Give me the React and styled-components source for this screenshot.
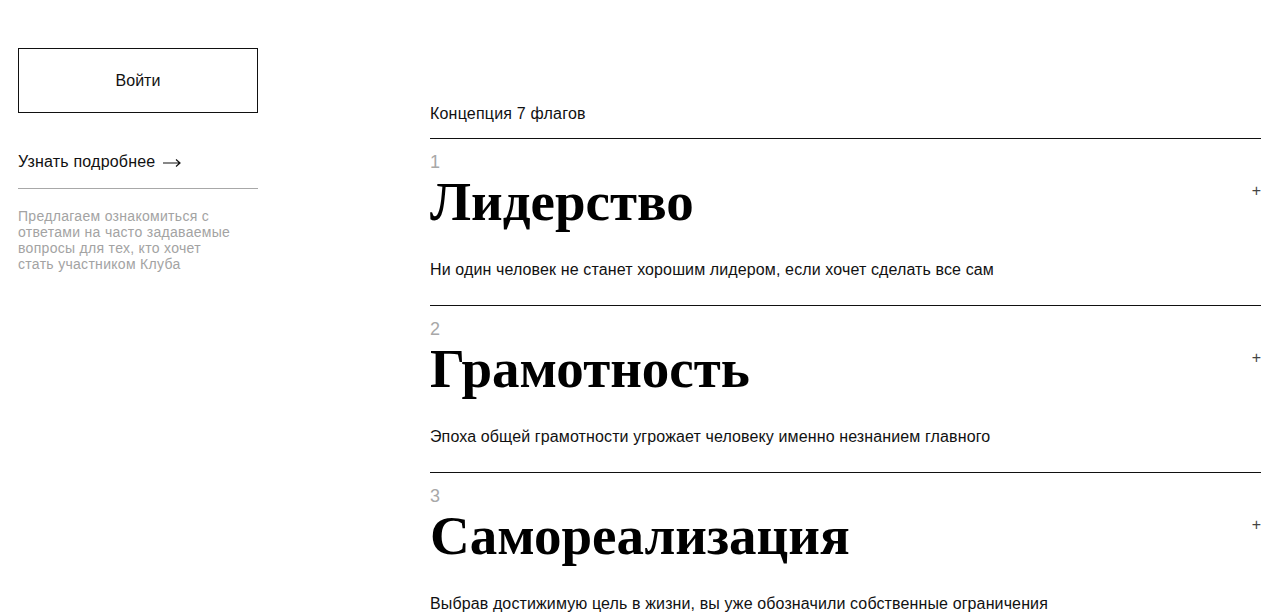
import React from 'react';
import styled, { createGlobalStyle } from 'styled-components';

const GlobalStyle = createGlobalStyle`
  body {
    margin: 0;
    background: #fff;
    color: #111;
    font-family: "Liberation Sans", Arial, sans-serif;
  }
`;

const flags = [
  {
    title: 'Лидерство',
    text: 'Ни один человек не станет хорошим лидером, если хочет сделать все сам'
  },
  {
    title: 'Грамотность',
    text: 'Эпоха общей грамотности угрожает человеку именно незнанием главного'
  },
  {
    title: 'Самореализация',
    text: 'Выбрав достижимую цель в жизни, вы уже обозначили собственные ограничения'
  }
];

const Page = styled.div`
  display: flex;
  padding: 48px 21px 0 18px;
  height: 614px;
  box-sizing: border-box;
  overflow: hidden;
`;

const Sidebar = styled.aside`
  width: 240px;
  flex-shrink: 0;
  display: flex;
  flex-direction: column;
`;

const LoginButton = styled.button`
  height: 65px;
  width: 100%;
  background: transparent;
  border: 1px solid #111;
  font-family: inherit;
  font-size: 16px;
  color: #111;
  cursor: pointer;
`;

const MoreLink = styled.a`
  display: flex;
  align-items: center;
  gap: 8px;
  margin-top: 39px;
  padding-bottom: 16px;
  border-bottom: 1px solid #a8a8a8;
  font-size: 16px;
  line-height: 20px;
  letter-spacing: 0.2px;
  color: #111;
  text-decoration: none;
`;

const Arrow = styled.svg`
  width: 18px;
  height: 10px;
  margin-top: 2px;
`;

const Note = styled.p`
  margin: 19px 0 0;
  font-size: 14px;
  line-height: 16px;
  letter-spacing: 0.3px;
  color: #a3a3a3;
  width: 215px;
`;

const Main = styled.main`
  margin-left: 172px;
  flex: 1;
`;

const Heading = styled.div`
  margin-top: 56px;
  padding-bottom: 14px;
  border-bottom: 1px solid #111;
  font-size: 16px;
  line-height: 20px;
  letter-spacing: 0.2px;
`;

const Flag = styled.section`
  padding: 13px 0 25px;
  border-bottom: 1px solid #111;
`;

const Number = styled.div`
  font-size: 18px;
  line-height: 20px;
  color: #a8a8a8;
`;

const TitleRow = styled.div`
  display: flex;
  justify-content: space-between;
  align-items: flex-start;
`;

const Title = styled.h2`
  margin: 0;
  font-family: "Liberation Serif", "Times New Roman", serif;
  font-weight: 700;
  font-size: 55px;
  line-height: 60px;
  color: #000;
`;

const Plus = styled.span`
  margin-top: 9px;
  font-size: 16px;
  line-height: 20px;
  color: #444;
`;

const Text = styled.p`
  margin: 28px 0 0;
  font-size: 16px;
  line-height: 20px;
  letter-spacing: 0.12px;
`;

export default function App() {
  return (
    <>
      <GlobalStyle />
      <Page>
        <Sidebar>
          <LoginButton>Войти</LoginButton>
          <MoreLink href="#">
            Узнать подробнее
            <Arrow viewBox="0 0 18 10" fill="none" stroke="#111" strokeWidth="1.2">
              <path d="M0 5h17M13 1.5L17 5l-4 3.5" />
            </Arrow>
          </MoreLink>
          <Note>
            Предлагаем ознакомиться с ответами на часто задаваемые вопросы для тех, кто хочет стать участником Клуба
          </Note>
        </Sidebar>
        <Main>
          <Heading>Концепция 7 флагов</Heading>
          {flags.map((f, i) => (
            <Flag key={f.title}>
              <Number>{i + 1}</Number>
              <TitleRow>
                <Title>{f.title}</Title>
                <Plus>+</Plus>
              </TitleRow>
              <Text>{f.text}</Text>
            </Flag>
          ))}
        </Main>
      </Page>
    </>
  );
}
